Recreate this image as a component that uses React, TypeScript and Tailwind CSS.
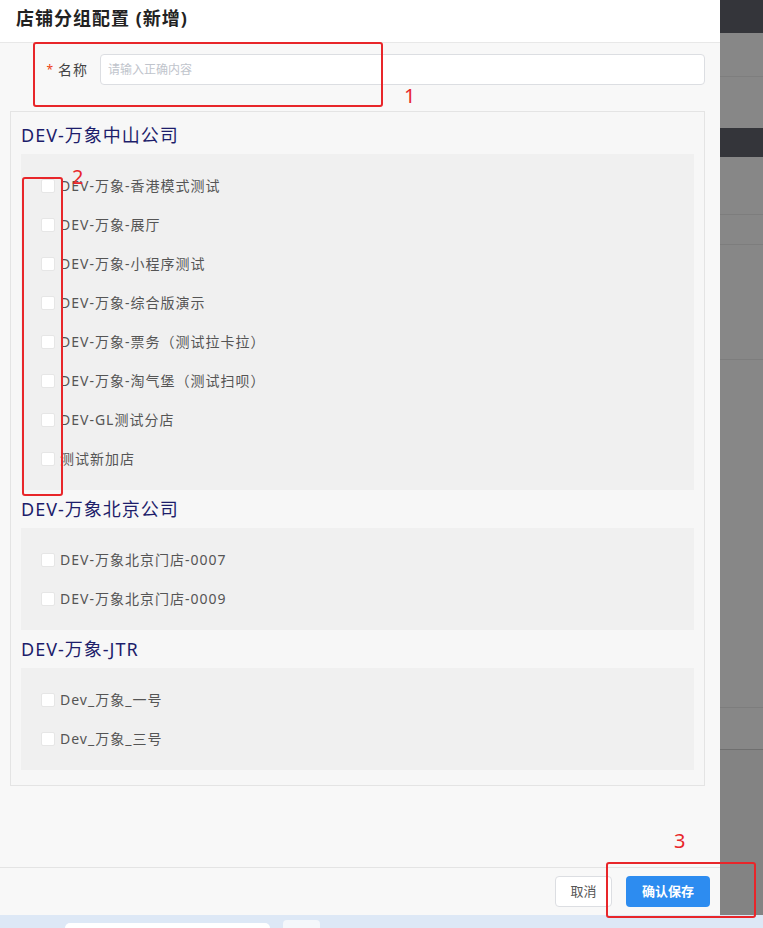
const groups = [
  {
    title: "DEV-万象中山公司",
    shops: [
      "DEV-万象-香港模式测试",
      "DEV-万象-展厅",
      "DEV-万象-小程序测试",
      "DEV-万象-综合版演示",
      "DEV-万象-票务（测试拉卡拉）",
      "DEV-万象-淘气堡（测试扫呗）",
      "DEV-GL测试分店",
      "测试新加店",
    ],
  },
  {
    title: "DEV-万象北京公司",
    shops: ["DEV-万象北京门店-0007", "DEV-万象北京门店-0009"],
  },
  {
    title: "DEV-万象-JTR",
    shops: ["Dev_万象_一号", "Dev_万象_三号"],
  },
];

function ShopRow({ name }: { name: string }) {
  return (
    <label className="flex h-[39px] items-center pl-5">
      <span className="h-[14px] w-[14px] rounded-[2px] border border-[#e6e6e6] bg-white" />
      <span className="ml-[5px] text-[14px] tracking-[1px] text-[#555]">{name}</span>
    </label>
  );
}

export default function App() {
  return (
    <div
      className="relative flex h-[928px] w-[763px] flex-col overflow-hidden"
      style={{ fontFamily: '"Noto Sans", "Noto Sans CJK SC", sans-serif' }}
    >
      <div className="flex min-h-0 flex-1">
        {/* modal */}
        <div className="flex w-[720px] flex-col bg-[#f8f8f8]">
          <div className="flex h-[43px] items-center border-b border-[#e8e8e8] bg-white px-4 pb-[5px]">
            <h1 className="text-[18px] font-bold tracking-[1px] text-[#222]">店铺分组配置 (新增)</h1>
          </div>

          <div className="flex-1 px-[10px]">
            <div className="mt-[11px] flex items-center pr-[5px]">
              <div className="flex w-[78px] items-center justify-end text-[14px] tracking-[1px] text-[#444]">
                <span className="mr-[4px] text-[12px] text-[#ed4014]">*</span>
                名称
              </div>
              <input
                className="ml-[12px] h-[31px] flex-1 rounded border border-[#dcdee2] bg-white px-[7px] text-[12px] outline-none placeholder:text-[#c0c4cc]"
                placeholder="请输入正确内容"
              />
            </div>

            <div className="mt-[26px] w-[695px] border border-[#e4e4e4] bg-[#f7f7f7] px-[10px] pb-[15px] pt-[4px]">
              {groups.map((g) => (
                <div key={g.title}>
                  <div className="flex h-[38px] items-center text-[18px] tracking-[1px] text-[#1d1d6b]">
                    {g.title}
                  </div>
                  <div className="bg-[#f0f0f0] py-3">
                    {g.shops.map((s) => (
                      <ShopRow key={s} name={s} />
                    ))}
                  </div>
                </div>
              ))}
            </div>
          </div>

          <div className="flex h-[48px] items-center justify-end gap-[14px] border-t border-[#e4e4e4] pr-[10px]">
            <button className="h-[31px] w-[57px] rounded border border-[#dcdee2] bg-white text-[13px] text-[#555]">
              取消
            </button>
            <button className="h-[31px] w-[84px] rounded bg-[#2d8cf0] text-[13px] font-bold text-white">
              确认保存
            </button>
          </div>
        </div>

        {/* backdrop over the page behind */}
        <div className="flex flex-1 flex-col bg-[#878787]">
          <div className="h-[33px] bg-[#34353a]" />
          <div className="h-[44px] border-b border-[#7e7e7e]" />
          <div className="h-[51px]" />
          <div className="h-[29px] bg-[#34353a]" />
          <div className="h-[58px] border-b border-[#7d7d7d]" />
          <div className="h-[30px] border-b border-[#7d7d7d]" />
          <div className="h-[115px] border-b border-[#7d7d7d]" />
          <div className="h-[348px] border-b border-[#7d7d7d]" />
          <div className="h-[42px] border-b border-[#6f6f6f]" />
          <div className="flex-1 bg-[#838383]" />
        </div>
      </div>

      {/* taskbar strip */}
      <div className="flex h-[13px] items-end gap-[13px] bg-[#dde8f6] pl-[65px]">
        <div className="h-[5px] w-[205px] rounded-t-md bg-white" />
        <div className="h-[8px] w-[37px] rounded-t-sm bg-[#f4f7fb]" />
      </div>

      {/* red annotations */}
      <div className="absolute left-[33px] top-[42px] h-[65px] w-[350px] rounded-[3px] border-2 border-[#e8262a]" />
      <span className="absolute left-[404px] top-[86px] text-[20px] leading-none text-[#e8262a]">1</span>
      <div className="absolute left-[22px] top-[177px] h-[319px] w-[41px] rounded-[3px] border-2 border-[#e8262a]" />
      <span className="absolute left-[72px] top-[167px] text-[20px] leading-none text-[#e8262a]">2</span>
      <div className="absolute left-[606px] top-[862px] h-[56px] w-[150px] rounded-[3px] border-2 border-[#e8262a]" />
      <span className="absolute left-[674px] top-[831px] text-[20px] leading-none text-[#e8262a]">3</span>
    </div>
  );
}
